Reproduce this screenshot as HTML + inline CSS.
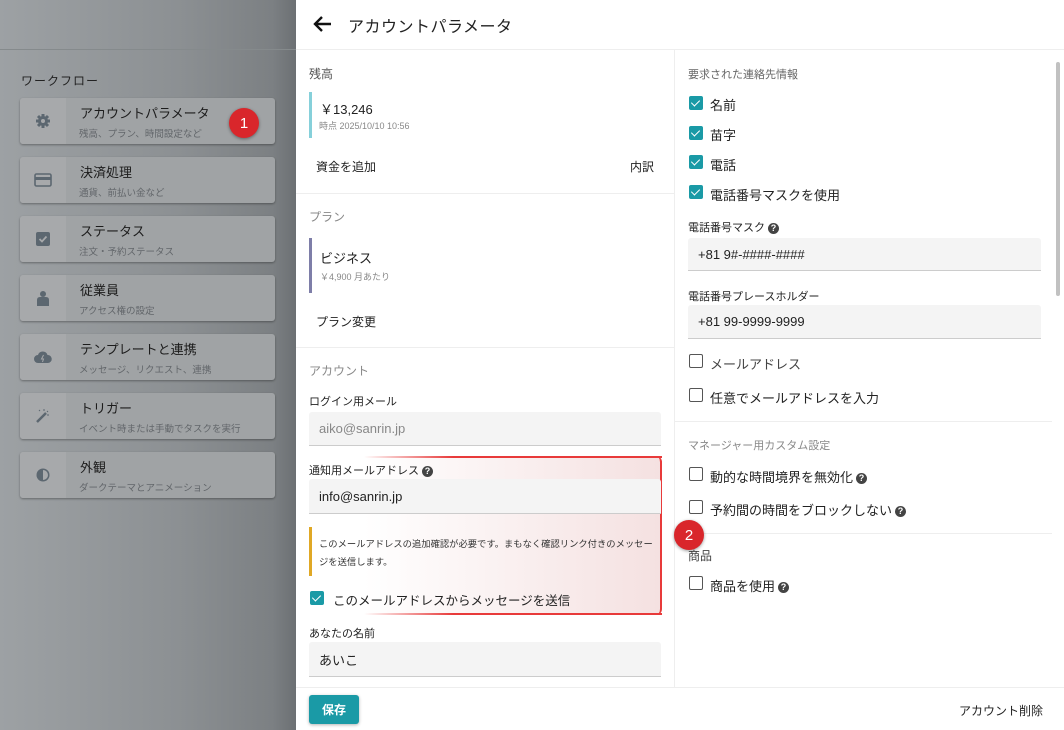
<!DOCTYPE html>
<html><head><meta charset="utf-8"><style>
*{box-sizing:border-box;margin:0;padding:0}
body{width:1064px;height:730px;overflow:hidden;position:relative;font-family:"Liberation Sans","Noto Sans CJK JP",sans-serif;color:#222;background:#fff}
.left{position:absolute;left:0;top:0;width:296px;height:730px;background:linear-gradient(90deg,#9da1a4 0%,#8c9093 60%,#7c8083 92%,#6c7073 100%)}
.left .hl{position:absolute;left:0;top:49px;width:296px;height:1px;background:#858a8c}
.wf{position:absolute;left:21px;top:72px;font-size:12px;letter-spacing:1px;color:#222}
.card{position:absolute;left:20px;width:255px;height:46px;background:#a0a3a5;border-radius:3px;box-shadow:0 1px 2px rgba(0,0,0,.35);overflow:hidden}
.card .ic{position:absolute;left:0;top:0;width:46px;height:46px;background:#a7a9ab;display:flex;align-items:center;justify-content:center}
.card .t{position:absolute;left:60px;top:5px;font-size:13px;color:#1c1c1c}
.card .s{position:absolute;left:59px;top:28px;font-size:9.5px;color:#62666a}
.badge{position:absolute;width:30px;height:30px;border-radius:50%;background:#d9262b;color:#fff;font-size:15px;display:flex;align-items:center;justify-content:center;box-shadow:0 1px 3px rgba(0,0,0,.4)}
.drawer{position:absolute;left:296px;top:0;width:768px;height:730px;background:#fff}
.hdr{position:absolute;left:0;top:0;width:768px;height:50px;border-bottom:1px solid #eee}
.hdr .tt{position:absolute;left:52px;top:13px;font-size:16px;letter-spacing:.5px}
.abs{position:absolute}
.lab{font-size:11px;color:#666}
.hr{position:absolute;height:1px;background:#eee}
.inp{position:absolute;background:#f4f4f4;border-bottom:1px solid #ccc;border-radius:3px 3px 0 0;font-size:13px;padding-left:10px;display:flex;align-items:center}
.cb{position:absolute;width:14px;height:14px;border-radius:2px;background:#1a9aa6}
.cb:after{content:"";position:absolute;left:4px;top:2px;width:4px;height:7px;border:solid #fff;border-width:0 1.5px 1.5px 0;transform:rotate(45deg)}
.cbe{position:absolute;width:14px;height:14px;border:1.5px solid #555;border-radius:2px}
.ct{position:absolute;font-size:13px;color:#222}
.q{display:inline-block;width:11px;height:11px;border-radius:50%;background:#444;color:#fff;font-size:9px;line-height:11px;text-align:center;font-weight:bold;vertical-align:middle;margin-left:3px}
</style></head><body>
<div class="left">
<div class="hl"></div>
<div class="wf">ワークフロー</div>
<div class="card" style="top:98px"><div class="ic"><svg width="16" height="16" viewBox="0 0 16 16"><circle cx="8" cy="8" r="5" fill="#5c6770"/><g stroke="#5c6770" stroke-width="3"><line x1="8" y1="1" x2="8" y2="15"/><line x1="1" y1="8" x2="15" y2="8"/><line x1="3" y1="3" x2="13" y2="13"/><line x1="13" y1="3" x2="3" y2="13"/></g><circle cx="8" cy="8" r="2" fill="#a7a9ab"/></svg></div><div class="t">アカウントパラメータ</div><div class="s">残高、プラン、時間設定など</div></div>
<div class="card" style="top:157px"><div class="ic"><svg width="18" height="14"><rect x="1" y="1" width="16" height="12" rx="1.5" fill="none" stroke="#5c6770" stroke-width="1.6"/><rect x="1" y="4" width="16" height="3" fill="#5c6770"/></svg></div><div class="t">決済処理</div><div class="s">通貨、前払い金など</div></div>
<div class="card" style="top:216px"><div class="ic"><svg width="14" height="14"><rect width="14" height="14" rx="2" fill="#5c6770"/><path d="M3.5 7l2.5 2.5 4.5-5" stroke="#a7a9ab" stroke-width="1.8" fill="none"/></svg></div><div class="t">ステータス</div><div class="s">注文・予約ステータス</div></div>
<div class="card" style="top:275px"><div class="ic"><svg width="12" height="16"><circle cx="6" cy="4" r="3" fill="#5c6770"/><path d="M0 16V10q0-3 3-3h6q3 0 3 3v6z" fill="#5c6770"/></svg></div><div class="t">従業員</div><div class="s">アクセス権の設定</div></div>
<div class="card" style="top:334px"><div class="ic"><svg width="18" height="12"><path d="M4 12a4 4 0 0 1 0-8 5 5 0 0 1 9.5 0A4 4 0 0 1 14 12z" fill="#5c6770"/><path d="M9.5 4L7.5 8h2l-1 3" stroke="#a7a9ab" fill="none"/></svg></div><div class="t">テンプレートと連携</div><div class="s">メッセージ、リクエスト、連携</div></div>
<div class="card" style="top:393px"><div class="ic"><svg width="16" height="16"><line x1="2" y1="14" x2="11" y2="5" stroke="#5c6770" stroke-width="2.5"/><path d="M4 2l1 1M9 1v2M13 3l-1 1M14 7h-2" stroke="#5c6770"/></svg></div><div class="t">トリガー</div><div class="s">イベント時または手動でタスクを実行</div></div>
<div class="card" style="top:452px"><div class="ic"><svg width="16" height="16"><circle cx="8" cy="8" r="6.5" fill="#5c6770"/><path d="M8 3a5 5 0 0 1 0 10z" fill="#a7a9ab"/></svg></div><div class="t">外観</div><div class="s">ダークテーマとアニメーション</div></div>
</div>
<div class="badge" style="left:229px;top:108px">1</div>

<div class="drawer">
<div class="hdr"><svg class="abs" style="left:16px;top:15px" width="20" height="18"><path d="M19 9H3M10 2L3 9l7 7" stroke="#111" stroke-width="2.4" fill="none"/></svg><div class="tt">アカウントパラメータ</div></div>
<div class="abs" style="left:378px;top:50px;width:1px;height:637px;background:#eee"></div>
<div class="abs lab" style="left:13px;top:65px;color:#555;font-size:12px">残高</div>
<div class="abs" style="left:13px;top:92px;width:3px;height:46px;background:#86d0da"></div>
<div class="abs" style="left:24px;top:99px;font-size:13px">￥13,246</div>
<div class="abs" style="left:23px;top:119px;font-size:9px;color:#888">時点 2025/10/10 10:56</div>
<div class="abs" style="left:20px;top:158px;font-size:12px">資金を追加</div>
<div class="abs" style="left:334px;top:158px;font-size:12px">内訳</div>
<div class="hr" style="left:0;top:193px;width:378px"></div>
<div class="abs lab" style="left:13px;top:208px;color:#888;font-size:12px">プラン</div>
<div class="abs" style="left:13px;top:238px;width:3px;height:55px;background:#7e7ea8"></div>
<div class="abs" style="left:24px;top:248px;font-size:13px">ビジネス</div>
<div class="abs" style="left:24px;top:270px;font-size:9px;color:#888">￥4,900 月あたり</div>
<div class="abs" style="left:20px;top:313px;font-size:12px">プラン変更</div>
<div class="hr" style="left:0;top:347px;width:378px"></div>
<div class="abs lab" style="left:13px;top:362px;color:#888;font-size:12px">アカウント</div>
<div class="abs lab" style="left:13px;top:393px;color:#222">ログイン用メール</div>
<div class="inp" style="left:13px;top:412px;width:352px;height:34px;color:#888">aiko@sanrin.jp</div>
<div class="abs" style="left:68px;top:456px;width:298px;height:159px;border-radius:0 6px 6px 0;border-right:2px solid #e83a3a;background:linear-gradient(90deg,rgba(255,255,255,0),rgba(236,200,200,.55))"></div>
<div class="abs" style="left:68px;top:456px;width:298px;height:2px;background:linear-gradient(90deg,rgba(232,58,58,0),#e83a3a 30%)"></div>
<div class="abs" style="left:68px;top:613px;width:298px;height:2px;background:linear-gradient(90deg,rgba(232,58,58,0),#e83a3a 30%)"></div>
<div class="abs lab" style="left:13px;top:462px;color:#222">通知用メールアドレス<span class="q">?</span></div>
<div class="inp" style="left:13px;top:479px;width:352px;height:35px">info@sanrin.jp</div>
<div class="abs" style="left:13px;top:527px;width:3px;height:49px;background:#e0a825"></div>
<div class="abs" style="left:23px;top:535px;font-size:9.3px;line-height:18px;color:#333;width:340px">このメールアドレスの追加確認が必要です。まもなく確認リンク付きのメッセージを送信します。</div>
<div class="cb" style="left:14px;top:591px"></div>
<div class="ct" style="left:37px;top:590px;font-size:12.5px">このメールアドレスからメッセージを送信</div>
<div class="abs lab" style="left:13px;top:625px;color:#222">あなたの名前</div>
<div class="inp" style="left:13px;top:642px;width:352px;height:35px">あいこ</div>
<div class="abs lab" style="left:392px;top:66px">要求された連絡先情報</div>
<div class="cb" style="left:393px;top:96px"></div><div class="ct" style="left:414px;top:95px">名前</div>
<div class="cb" style="left:393px;top:126px"></div><div class="ct" style="left:414px;top:125px">苗字</div>
<div class="cb" style="left:393px;top:155px"></div><div class="ct" style="left:414px;top:155px">電話</div>
<div class="cb" style="left:393px;top:185px"></div><div class="ct" style="left:414px;top:185px">電話番号マスクを使用</div>
<div class="abs lab" style="left:392px;top:219px;color:#222">電話番号マスク<span class="q">?</span></div>
<div class="inp" style="left:392px;top:238px;width:353px;height:33px">+81 9#-####-####</div>
<div class="abs lab" style="left:392px;top:288px;color:#222">電話番号プレースホルダー</div>
<div class="inp" style="left:392px;top:305px;width:353px;height:34px">+81 99-9999-9999</div>
<div class="cbe" style="left:393px;top:354px"></div><div class="ct" style="left:414px;top:354px;color:#444">メールアドレス</div>
<div class="cbe" style="left:393px;top:388px"></div><div class="ct" style="left:414px;top:388px">任意でメールアドレスを入力</div>
<div class="hr" style="left:378px;top:421px;width:378px"></div>
<div class="abs lab" style="left:392px;top:437px;color:#888">マネージャー用カスタム設定</div>
<div class="cbe" style="left:393px;top:467px"></div><div class="ct" style="left:414px;top:467px">動的な時間境界を無効化<span class="q">?</span></div>
<div class="cbe" style="left:393px;top:500px"></div><div class="ct" style="left:414px;top:500px">予約間の時間をブロックしない<span class="q">?</span></div>
<div class="hr" style="left:378px;top:533px;width:378px"></div>
<div class="abs lab" style="left:392px;top:547px;color:#444;font-size:12px">商品</div>
<div class="cbe" style="left:393px;top:576px"></div><div class="ct" style="left:414px;top:576px">商品を使用<span class="q">?</span></div>
<div class="abs" style="left:760px;top:62px;width:4px;height:234px;background:#c1c1c1;border-radius:2px"></div>
<div class="hr" style="left:0;top:687px;width:768px"></div>
<div class="abs" style="left:13px;top:695px;width:50px;height:29px;background:#1a9aa6;border-radius:3px;color:#fff;font-size:12px;font-weight:bold;display:flex;align-items:center;justify-content:center;box-shadow:0 1px 3px rgba(0,0,0,.3)">保存</div>
<div class="abs" style="left:663px;top:702px;font-size:12px">アカウント削除</div>
</div>
<div class="badge" style="left:674px;top:520px">2</div>
</body></html>
